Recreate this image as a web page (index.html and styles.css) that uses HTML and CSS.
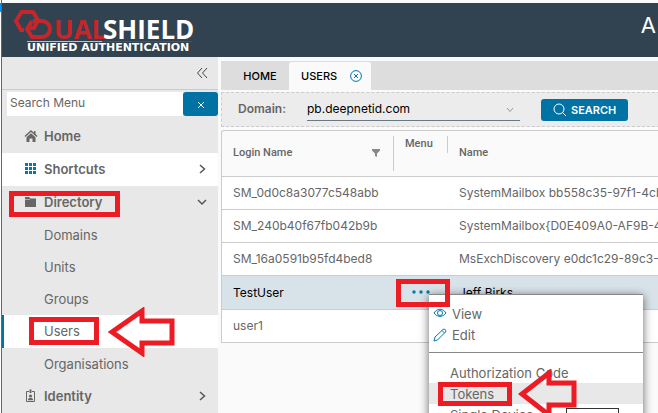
FILE: index.html
```html
<!DOCTYPE html>
<html lang="en">
<head>
    <meta charset="UTF-8">
    <meta name="viewport" content="width=device-width, initial-scale=1.0">
    <title>DualShield - Users</title>
    <link rel="stylesheet" href="styles.css">
</head>
<body>
    <div class="edge"></div>
    <div class="app">
        <header class="topbar">
            <svg class="logo" width="186" height="48" viewBox="0 0 186 48" role="img" aria-label="DualShield Unified Authentication">
                <path class="hex" d="M11 27H8L3 18L8.500 9H20L25 17L21 25H17"/>
                <path class="hex" d="M20 18H28C40 18 40 34 28 34H19L14 26L19 18"/>
                <text class="logo-dual" x="41" y="36">UAL</text>
                <text class="logo-shield" x="90" y="36">SHIELD</text>
                <path class="line-white" d="M14 38.500H89"/>
                <path class="line-red" d="M89 38.500H179"/>
                <text class="logo-sub" x="14" y="48">UNIFIED AUTHENTICATION</text>
            </svg>
            <span class="title">A</span>
        </header>

        <div class="layout">
            <aside class="sidebar">
                <div class="collapse-row">
                    <button class="collapse" aria-label="Collapse menu">
                        <svg width="12" height="12" viewBox="0 0 12 12"><path d="M6 1L1.500 6L6 11M11 1L6.500 6L11 11"/></svg>
                    </button>
                </div>
                <div class="search-row">
                    <input class="menu-search" type="text" placeholder="Search Menu" aria-label="Search Menu">
                    <button class="clear" aria-label="Clear">
                        <svg width="8" height="8" viewBox="0 0 8 8"><path d="M1 1L7 7M7 1L1 7"/></svg>
                    </button>
                </div>
                <nav class="menu">
                    <a class="item" href="#">
                        <svg class="icon" width="14" height="14" viewBox="0 0 14 14"><path d="M7 1L0.500 7L1.500 8L7 3L12.500 8L13.500 7L11.500 5V2H10V3.800Z"/><path d="M2.500 8.200L7 4.200L11.500 8.200V13H8.500V9.500H5.500V13H2.500Z"/></svg>
                        Home
                    </a>
                    <a class="item white" href="#">
                        <svg class="icon blue" width="14" height="14" viewBox="0 0 14 14"><path d="M1 1H4V4H1ZM5 1H8V4H5ZM9 1H12V4H9ZM1 5H4V8H1ZM5 5H8V8H5ZM9 5H12V8H9ZM1 9H4V12H1ZM5 9H8V12H5ZM9 9H12V12H9Z"/></svg>
                        Shortcuts
                        <svg class="caret" width="10" height="10" viewBox="0 0 10 10"><path d="M3 1L7.500 5L3 9"/></svg>
                    </a>
                    <a class="item" href="#">
                        <svg class="icon" width="14" height="14" viewBox="0 0 14 14"><path d="M1 3.500V2H5L6.500 3.500H12V12H1Z"/><path class="fold" d="M1 4.500H6"/></svg>
                        Directory
                        <svg class="caret" width="10" height="10" viewBox="0 0 10 10"><path d="M1 3L5 7L9 3"/></svg>
                    </a>
                    <a class="sub" href="#">Domains</a>
                    <a class="sub" href="#">Units</a>
                    <a class="sub" href="#">Groups</a>
                    <a class="sub active" href="#">Users</a>
                    <a class="sub" href="#">Organisations</a>
                    <a class="item" href="#">
                        <svg class="icon" width="14" height="14" viewBox="0 0 14 14"><path class="badge" d="M5 2.500H2.500V12.500H10.500V2.500H8"/><path d="M5.500 0.500H7.500V4H5.500ZM4 10.500C4 8.500 9 8.500 9 10.500V11.200H4Z"/><circle cx="6.500" cy="7" r="1.600"/></svg>
                        Identity
                        <svg class="caret" width="10" height="10" viewBox="0 0 10 10"><path d="M3 1L7.500 5L3 9"/></svg>
                    </a>
                </nav>
            </aside>

            <main class="content">
                <div class="tabs">
                    <button class="tab">HOME</button>
                    <button class="tab current">USERS
                        <svg width="12" height="12" viewBox="0 0 12 12"><circle cx="6" cy="6" r="5.400"/><path d="M4 4L8 8M8 4L4 8"/></svg>
                    </button>
                </div>

                <form class="filter">
                    <label for="domain">Domain:</label>
                    <div class="select-wrap">
                        <select id="domain">
                            <option>pb.deepnetid.com</option>
                        </select>
                        <svg class="down" width="8" height="6" viewBox="0 0 8 6"><path d="M1 1L4 4.500L7 1"/></svg>
                    </div>
                    <button class="search" type="button">
                        <svg width="14" height="14" viewBox="0 0 14 14"><circle cx="6" cy="6" r="5"/><path d="M9.500 9.500L13 13"/></svg>
                        SEARCH
                    </button>
                </form>

                <table class="grid">
                    <thead>
                        <tr>
                            <th class="col-login">
                                <div class="head tall">Login Name
                                    <svg width="8" height="8" viewBox="0 0 8 8"><path d="M0 0H8V1.500L5 4.500V8L3 7V4.500L0 1.500Z"/></svg>
                                </div>
                            </th>
                            <th class="col-menu"><div class="head">Menu</div></th>
                            <th><div class="head tall last">Name</div></th>
                        </tr>
                    </thead>
                    <tbody>
                        <tr><td>SM_0d0c8a3077c548abb</td><td></td><td>SystemMailbox bb558c35-97f1-4cb9</td></tr>
                        <tr><td>SM_240b40f67fb042b9b</td><td></td><td>SystemMailbox{D0E409A0-AF9B-4</td></tr>
                        <tr><td>SM_16a0591b95fd4bed8</td><td></td><td>MsExchDiscovery e0dc1c29-89c3-4</td></tr>
                        <tr class="selected">
                            <td>TestUser</td>
                            <td class="dots-cell">
                                <button class="dots" aria-label="Menu">
                                    <svg width="20" height="4" viewBox="0 0 20 4"><circle cx="2" cy="2" r="1.700"/><circle cx="9" cy="2" r="1.700"/><circle cx="16" cy="2" r="1.700"/></svg>
                                </button>
                            </td>
                            <td>Jeff Birks</td>
                        </tr>
                        <tr><td>user1</td><td></td><td></td></tr>
                    </tbody>
                </table>
            </main>
        </div>
    </div>

    <!-- context menu of the selected row -->
    <div class="popup">
        <button class="action">
            <svg width="14" height="14" viewBox="0 0 14 14"><path d="M1 6C4 1 10 1 13 6C10 10.500 4 10.500 1 6Z"/><circle cx="7" cy="6" r="2.500"/></svg>
            View
        </button>
        <button class="action">
            <svg width="14" height="14" viewBox="0 0 14 14"><path d="M1 13L2 9L10 1.500Q11 0.500 12.300 1.700Q13.500 3 12.500 4L4.500 12ZM9 2.500L11.500 5"/></svg>
            Edit
        </button>
        <hr>
        <button class="action plain">Authorization Code</button>
        <button class="action plain hover">Tokens</button>
        <button class="action plain">Single Device</button>
    </div>
    <div class="tip"></div>

    <!-- highlights -->
    <div class="mark mark-directory"></div>
    <div class="mark mark-users"></div>
    <div class="mark mark-dots"></div>
    <div class="mark mark-tokens"></div>
    <svg class="arrow arrow-users" width="68" height="50" viewBox="0 0 68 50"><path d="M4 25L34 4V14H64V36H34V46Z"/></svg>
    <svg class="arrow arrow-tokens" width="60" height="50" viewBox="0 0 60 50"><path d="M4 25L31 4V14H56V36H31V46Z"/></svg>
</body>
</html>
```
FILE: styles.css
```css
* {
    box-sizing: border-box;
}
body {
    margin: 0;
    height: 100vh;
    overflow: hidden;
    position: relative;
    display: flex;
    background: #fafafa;
    color: #666;
    font-family: Inter, "Open Sans", sans-serif;
    font-size: 13px;
}
button, input, select {
    font-family: inherit;
    font-size: inherit;
    color: inherit;
    border: none;
    padding: 0;
    margin: 0;
}
button {
    background: none;
    cursor: pointer;
}
svg {
    flex: none;
    fill: none;
}
a {
    color: inherit;
    text-decoration: none;
}
.edge {
    flex: none;
    width: 2px;
    border-right: 1px solid #666;
    background: linear-gradient(#fff 3px, #0a93ea 3px, #0a93ea 12px, #fff 12px);
}
.app {
    flex: 1;
    min-width: 0;
    padding-top: 3px;
}
.topbar {
    display: flex;
    justify-content: space-between;
    height: 54px;
    padding-left: 11px;
    background: #314351;
    color: #fff;
}
.title {
    padding: 8px 2px 0 0;
    font-size: 22px;
    line-height: 28px;
}
.logo {
    overflow: visible;
}
.hex {
    stroke: #c4262b;
    stroke-width: 4;
}
.logo-dual, .logo-shield {
    font: bold 26px "Open Sans", sans-serif;
}
.logo-dual {
    fill: #c4262b;
}
.logo-shield {
    fill: #fff;
}
.logo-sub {
    font: bold 11px "DejaVu Sans", sans-serif;
    fill: #fff;
}
.line-white {
    stroke: #b8c0c6;
}
.line-red {
    stroke: #a52a35;
}
.layout {
    display: flex;
}

/* sidebar */
.sidebar {
    flex: none;
    width: 216px;
    background: #e8e8e8;
}
.collapse-row {
    display: flex;
    justify-content: flex-end;
    align-items: center;
    height: 33px;
    padding-right: 10px;
    border-bottom: 1px solid #ccc;
}
.collapse {
    display: flex;
}
.collapse svg {
    stroke: #444;
}
.search-row {
    display: flex;
    padding: 2px 0 4px 5px;
}
.menu-search {
    flex: 1;
    min-width: 0;
    height: 24px;
    padding: 0 3px 3px;
    background: #fff;
    font-size: 12px;
}
.menu-search::placeholder {
    color: #666;
}
.clear {
    width: 35px;
    height: 24px;
    border-radius: 3px;
    background: #0072a3;
}
.clear svg {
    stroke: #fff;
}
.item, .sub {
    display: flex;
    align-items: center;
    padding-bottom: 1px;
}
.item {
    height: 33px;
    padding-left: 22px;
    padding-right: 11px;
    font-weight: 600;
}
.icon {
    margin-right: 6px;
    fill: #666;
}
.blue {
    fill: #0079ad;
}
.fold {
    stroke: #aaa;
}
.badge {
    fill: none;
    stroke: #666;
}
.caret {
    margin-left: auto;
    stroke: #565656;
    stroke-width: 1.5;
}
.white {
    background: #fff;
}
.sub {
    height: 32px;
    padding-left: 42px;
}
.active {
    height: 33px;
    padding-left: 40px;
    border-left: 2px solid #0072a3;
    background: #fff;
}

/* content */
.content {
    flex: 1;
    min-width: 0;
    padding: 4px 0 0 3px;
}
.tabs {
    display: flex;
    height: 29px;
    padding-top: 1px;
    background: #ddd;
}
.tab {
    width: 68px;
    padding-left: 10px;
    font-size: 11px;
    font-weight: 500;
    color: #000;
}
.current {
    display: flex;
    align-items: center;
    justify-content: space-between;
    width: 82px;
    padding: 0 9px 0 12px;
    border-radius: 3px 3px 0 0;
    background: #fafafa;
}
.current svg {
    stroke: #0079ad;
}
.filter {
    display: flex;
    align-items: center;
    height: 35px;
    margin: 2px -2px 3px 0;
    padding-left: 16px;
    border: 1px dashed #ccc;
    background: #ececec;
    font-size: 12px;
}
.filter label {
    width: 69px;
    padding-bottom: 3px;
    font-weight: 600;
}
.select-wrap {
    position: relative;
    width: 213px;
    border-bottom: 1px solid #6a7a85;
}
.select-wrap select {
    appearance: none;
    width: 100%;
    height: 22px;
    padding-bottom: 2px;
    background: transparent;
    color: #000;
}
.down {
    position: absolute;
    right: 6px;
    top: 9px;
    stroke: #999;
}
.search {
    display: flex;
    align-items: center;
    gap: 4px;
    height: 22px;
    margin-left: 21px;
    padding: 0 12px;
    border-radius: 3px;
    background: #0072a3;
    color: #fff;
    font-size: 11px;
    font-weight: 600;
}
.search svg {
    stroke: #fff;
}
.grid {
    width: 100%;
    table-layout: fixed;
    border-collapse: separate;
    border-spacing: 0;
    border: solid #ccc;
    border-width: 1px 0 0 1px;
    border-radius: 3px 0 0 0;
    white-space: nowrap;
}
th {
    height: 46px;
    padding: 5px 0 0;
    border-bottom: 1px solid #ccc;
    vertical-align: top;
    text-align: left;
    font: 500 11px Roboto, sans-serif;
}
.col-login {
    width: 172px;
}
.col-menu {
    width: 54px;
}
.head {
    display: flex;
    align-items: center;
    justify-content: space-between;
    height: 17px;
    padding: 0 13px 2px 11px;
    border-right: 1px solid #ccc;
}
.tall {
    height: 35px;
}
.last {
    border: none;
}
.head svg {
    fill: #888;
}
td {
    height: 33px;
    padding: 0 0 1px 11px;
    border-bottom: 1px solid #ccc;
    background: #fff;
    font-size: 12px;
}
.selected td {
    height: 34px;
    background: #d8e3e9;
    color: #000;
}
.selected .dots-cell {
    padding-left: 18px;
}
.dots {
    display: flex;
}
.dots svg {
    fill: #0079ad;
}

/* context menu */
.popup {
    position: absolute;
    left: 429px;
    top: 294px;
    width: 214px;
    padding-top: 8px;
    border-top: 1px solid #888;
    background: #fff;
    box-shadow: 0 2px 9px rgba(0, 0, 0, 0.6);
}
.popup hr {
    margin: 7px 0 9px;
    border: none;
    border-top: 1px solid #888;
}
.action {
    display: flex;
    align-items: center;
    gap: 5px;
    width: 100%;
    height: 21px;
    padding-left: 4px;
}
.action svg {
    stroke: #0079ad;
}
.plain {
    padding-left: 21px;
}
.hover {
    background: #e8e8e8;
}
.tip {
    position: absolute;
    left: 566px;
    top: 408px;
    width: 53px;
    height: 20px;
    border: 1px solid #333;
    background: #fff;
}

/* highlights */
.mark {
    position: absolute;
    border: 5px solid #ed1c24;
}
.mark-directory {
    left: 9px;
    top: 191px;
    width: 111px;
    height: 26px;
}
.mark-users {
    left: 29px;
    top: 317px;
    width: 70px;
    height: 28px;
}
.mark-dots {
    left: 396px;
    top: 279px;
    width: 54px;
    height: 28px;
}
.mark-tokens {
    left: 438px;
    top: 382px;
    width: 74px;
    height: 24px;
}
.arrow {
    position: absolute;
    stroke: #ed1c24;
    stroke-width: 5;
}
.arrow-users {
    left: 108px;
    top: 307px;
}
.arrow-tokens {
    left: 518px;
    top: 369px;
}
```
